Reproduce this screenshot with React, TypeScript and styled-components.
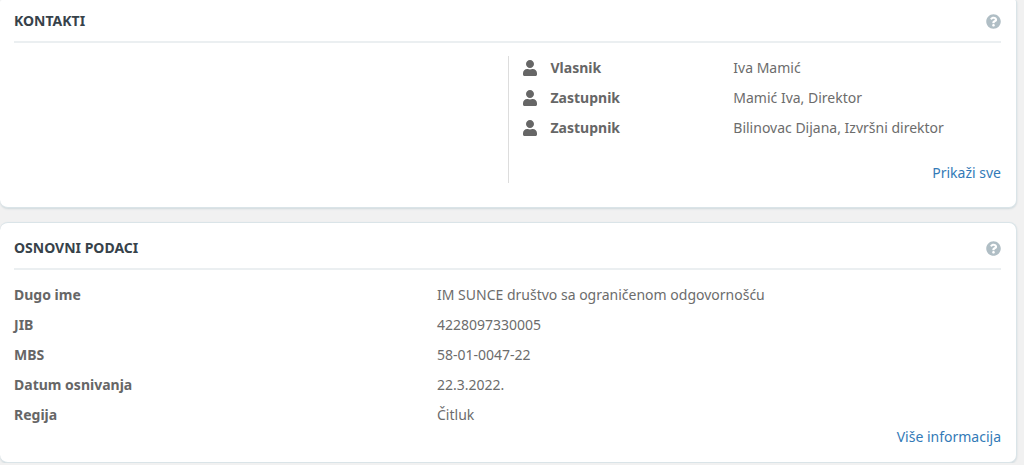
import React from "react";
import styled, { createGlobalStyle, css } from "styled-components";
import { FaQuestionCircle, FaUser } from "react-icons/fa";

const GlobalStyle = createGlobalStyle`
  *, *::before, *::after { box-sizing: border-box; }
  body {
    margin: 0;
    background: #f1f1f1;
    color: #666;
    font-family: "Segoe UI", "Noto Sans", sans-serif;
    font-size: 14px;
    line-height: 20px;
  }
`;

const Page = styled.main`
  display: flex;
  flex-direction: column;
  gap: 14px;
  padding-right: 7px;
`;

const Card = styled.section<{ $continued?: boolean }>`
  display: flex;
  flex-direction: column;
  padding: 15px 15px 15px 14px;
  background: #fff;
  border: 1px solid #dae4e8;
  border-left: 0;
  border-radius: 8px;
  box-shadow: 0 1px 2px #cfd8dc;
  ${({ $continued }) =>
    $continued &&
    css`
      padding-top: 11px;
      padding-bottom: 24px;
      border-top: 0;
      border-top-left-radius: 2px;
      border-top-right-radius: 2px;
    `}
`;

const CardHeader = styled.header`
  display: flex;
  align-items: center;
  justify-content: space-between;
  padding-bottom: 10px;
  border-bottom: 2px solid #ebeff1;
`;

const Title = styled.h2`
  margin: 0;
  color: #37424a;
  font-size: 14px;
  font-weight: 700;
`;

const HelpButton = styled.button`
  display: flex;
  padding: 0;
  border: 0;
  background: none;
  color: #b0bec5;
  font-size: 15px;
  cursor: pointer;
`;

const Halves = styled.div`
  display: grid;
  grid-template-columns: 1fr 1fr;
  margin-top: 13px;
`;

const People = styled.div`
  display: flex;
  flex-direction: column;
  gap: 25px;
  padding-left: 14px;
  border-left: 1px solid #ddd;
`;

const List = styled.dl`
  display: flex;
  flex-direction: column;
  gap: 10px;
  margin: 0;
`;

const PeopleList = styled(List)`
  padding-top: 2px;
`;

const DetailsList = styled(List)`
  padding: 15px 0 2px;
`;

const PersonRow = styled.div`
  display: grid;
  grid-template-columns: 28px 183fr 268fr;
  align-items: center;
`;

const DetailRow = styled.div`
  display: grid;
  grid-template-columns: 3fr 4fr;
`;

const PersonIcon = styled(FaUser)`
  width: 14px;
  height: 16px;
`;

const Label = styled.dt`
  font-weight: 700;
`;

const Value = styled.dd`
  margin: 0;
  color: #6c6c6c;
`;

const MoreLink = styled.a`
  align-self: flex-end;
  color: #337ab7;
  text-decoration: none;

  &:hover {
    text-decoration: underline;
  }
`;

const people = [
  { role: "Vlasnik", name: "Iva Mamić" },
  { role: "Zastupnik", name: "Mamić Iva, Direktor" },
  { role: "Zastupnik", name: "Bilinovac Dijana, Izvršni direktor" },
];

const details = [
  { label: "Dugo ime", value: "IM SUNCE društvo sa ograničenom odgovornošću" },
  { label: "JIB", value: "4228097330005" },
  { label: "MBS", value: "58-01-0047-22" },
  { label: "Datum osnivanja", value: "22.3.2022." },
  { label: "Regija", value: "Čitluk" },
];

function Heading({ title }: { title: string }) {
  return (
    <CardHeader>
      <Title>{title}</Title>
      <HelpButton type="button" aria-label="Pomoć">
        <FaQuestionCircle />
      </HelpButton>
    </CardHeader>
  );
}

export default function App() {
  return (
    <>
      <GlobalStyle />
      <Page>
        <Card $continued>
          <Heading title="KONTAKTI" />
          <Halves>
            <div />
            <People>
              <PeopleList>
                {people.map(({ role, name }) => (
                  <PersonRow key={name}>
                    <PersonIcon aria-hidden="true" />
                    <Label>{role}</Label>
                    <Value>{name}</Value>
                  </PersonRow>
                ))}
              </PeopleList>
              <MoreLink href="#kontakti">Prikaži sve</MoreLink>
            </People>
          </Halves>
        </Card>
        <Card>
          <Heading title="OSNOVNI PODACI" />
          <DetailsList>
            {details.map(({ label, value }) => (
              <DetailRow key={label}>
                <Label>{label}</Label>
                <Value>{value}</Value>
              </DetailRow>
            ))}
          </DetailsList>
          <MoreLink href="#podaci">Više informacija</MoreLink>
        </Card>
      </Page>
    </>
  );
}
